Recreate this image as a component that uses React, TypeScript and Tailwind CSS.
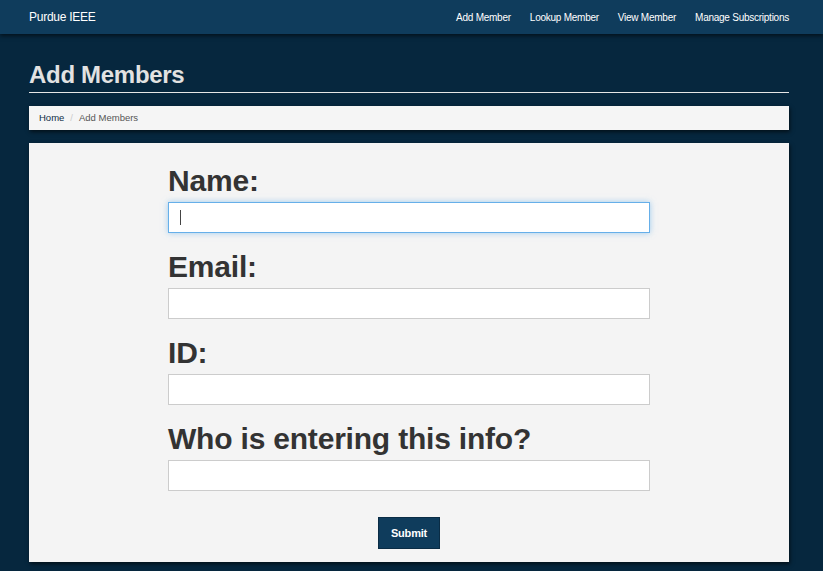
import React from "react";

const font = { fontFamily: '"Liberation Sans", Arial, Helvetica, sans-serif' };

function Field({ label, focused }: { label: string; focused?: boolean }) {
  return (
    <div className="flex flex-col">
      <h2 className="text-[30px] leading-[33px] font-bold text-[#333333] tracking-[-0.2px] mt-0 mb-[5px]">{label}</h2>
      {focused ? (
        <div className="relative h-[31px] w-full border border-[#66afe9] bg-white shadow-[0_0_6px_rgba(102,175,233,0.6)]">
          <span className="absolute left-[11px] top-[7px] h-[15px] w-px bg-[#444]" />
        </div>
      ) : (
        <input type="text" className="h-[31px] w-full border border-[#cccccc] bg-white outline-none" />
      )}
    </div>
  );
}

export default function App() {
  return (
    <div className="min-h-screen bg-[#06273e]" style={font}>
      <nav className="h-[34px] bg-[#0f3c5c] shadow-[0_2px_4px_rgba(0,0,0,0.55)] flex items-center justify-between pl-[29px] pr-[34px] relative z-10">
        <span className="text-white text-[12px] tracking-[-0.25px]">Purdue IEEE</span>
        <div className="flex items-center gap-[19px] text-white text-[10px] tracking-[-0.25px]">
          <span>Add Member</span>
          <span>Lookup Member</span>
          <span>View Member</span>
          <span>Manage Subscriptions</span>
        </div>
      </nav>
      <main className="pl-[29px] pr-[34px] pt-[28px] pb-[10px]">
        <div className="border-b border-[#e6e6e6] pb-[4px]">
          <h1 className="text-[24px] leading-[26px] font-bold text-[#e2e2e2] tracking-[-0.3px]">Add Members</h1>
        </div>
        <div className="mt-[13px] h-[24px] bg-[#f5f5f5] shadow-[1px_2px_4px_rgba(0,0,0,0.6)] flex items-center px-[10px] text-[9.5px]">
          <span className="text-[#0f2d45]">Home</span>
          <span className="text-[#cccccc] px-[6px]">/</span>
          <span className="text-[#555555]">Add Members</span>
        </div>
        <div className="mt-[13px] bg-[#f4f4f4] shadow-[1px_2px_4px_rgba(0,0,0,0.6)] pt-[21px] pb-[13px] flex flex-col items-center">
          <div className="w-[482px] flex flex-col gap-[17px]">
            <Field label="Name:" focused />
            <Field label="Email:" />
            <Field label="ID:" />
            <Field label="Who is entering this info?" />
          </div>
          <button className="mt-[26px] h-[32px] w-[62px] bg-[#0f3c5c] border border-[#0a2c45] text-white text-[11px] font-bold tracking-[-0.2px]">
            Submit
          </button>
        </div>
      </main>
    </div>
  );
}
